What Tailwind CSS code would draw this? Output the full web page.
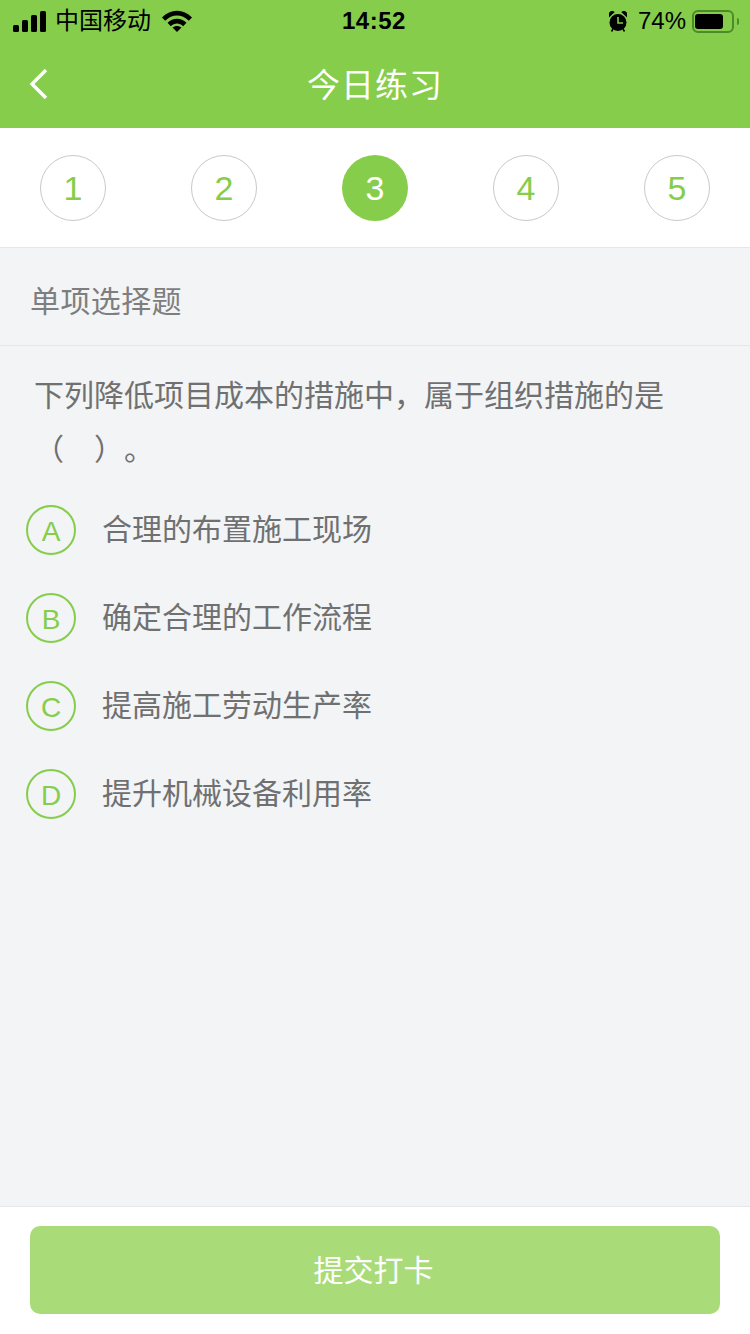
<!DOCTYPE html>
<html lang="zh">
<head>
<meta charset="utf-8">
<script src="https://cdn.jsdelivr.net/npm/@tailwindcss/browser@4"></script>
</head>
<body class="m-0">
<div class="w-[750px] h-[1334px] flex flex-col bg-[#f2f4f6] overflow-hidden font-['Liberation_Sans','Noto_Sans_CJK_SC',sans-serif]">
  <header class="h-[128px] bg-[#86cd4b] flex flex-col shrink-0">
    <div class="h-[42px] relative flex items-center justify-between pl-[13px] pr-[11px] text-black">
      <div class="flex items-center">
        <svg width="34" height="21" viewBox="0 0 34 21" fill="#000"><rect x="0" y="14" width="6" height="7" rx="1.5"/><rect x="9" y="9" width="6" height="12" rx="1.5"/><rect x="18" y="4" width="6" height="17" rx="1.5"/><rect x="27" y="0" width="6" height="21" rx="1.5"/></svg>
        <span class="ml-[8px] text-[24px] leading-none">中国移动</span>
        <svg class="ml-[11px]" width="30" height="22" viewBox="0 0 30 22"><path d="M0 7.5C8.500 -1.500 21.500 -1.500 30 7.500L26.800 10.800C20 3.800 10 3.800 3.200 10.800Z" fill="#000"/><path d="M5.500 12.800C11 7.300 19 7.300 24.500 12.800L21.200 16.200C17.500 12.600 12.500 12.600 8.800 16.200Z" fill="#000"/><path d="M10.500 17.600C13 15.300 17 15.300 19.500 17.600L15 22Z" fill="#000"/></svg>
      </div>
      <span class="absolute left-[342px] top-[8px] text-[24px] leading-[26px] font-bold tracking-[0.5px]">14:52</span>
      <div class="flex items-center">
        <svg width="18" height="21" viewBox="0 0 18 21"><circle cx="9" cy="11.500" r="8.500" fill="#000"/><path d="M9 6V12H14" stroke="#86cd4b" stroke-width="1.600" fill="none"/><path d="M0.500 5L4.500 1.200L2.800 0.300L0.500 2.300Z M17.500 5L13.500 1.200L15.200 0.300L17.500 2.300Z M4 18L2.500 20.500 M14 18L15.500 20.500" fill="#000" stroke="#000" stroke-width="1.500"/></svg>
        <span class="ml-[11px] text-[24px] leading-none">74%</span>
        <div class="ml-[6px] w-[42px] h-[23px] rounded-[6px] border-2 border-[#4c8a2a] py-[2px] pl-[1px]">
          <div class="w-[28px] h-full bg-black rounded-[3px]"></div>
        </div>
        <div class="ml-[3px] w-[2px] h-[7px] rounded-r-[2px] bg-[#4c8a2a]"></div>
      </div>
    </div>
    <div class="h-[86px] relative flex items-center justify-center">
      <svg class="absolute left-[28px] top-[26px]" width="22" height="32" viewBox="0 0 22 32"><path d="M18 2L4 16L18 30" stroke="#fff" stroke-width="3.400" fill="none"/></svg>
      <span class="text-white text-[33px] leading-none tracking-[1px]">今日练习</span>
    </div>
  </header>

  <nav class="h-[120px] shrink-0 bg-white border-b border-[#e6e7e9] flex items-start justify-between px-[40px] pt-[27px]">
    <div class="size-[66px] rounded-full border border-[#c9c9c9] flex items-center justify-center text-[34px] text-[#86cd4b]">1</div>
    <div class="size-[66px] rounded-full border border-[#c9c9c9] flex items-center justify-center text-[34px] text-[#86cd4b]">2</div>
    <div class="size-[66px] rounded-full bg-[#86cd4b] flex items-center justify-center text-[34px] text-white">3</div>
    <div class="size-[66px] rounded-full border border-[#c9c9c9] flex items-center justify-center text-[34px] text-[#86cd4b]">4</div>
    <div class="size-[66px] rounded-full border border-[#c9c9c9] flex items-center justify-center text-[34px] text-[#86cd4b]">5</div>
  </nav>

  <main class="flex-1 flex flex-col">
    <div class="h-[98px] shrink-0 border-b border-[#e6e7e9] flex items-center pl-[30px] pt-[10px] text-[30px] tracking-[0.4px] leading-none text-[#7e7e7e]">单项选择题</div>
    <p class="pl-[34px] pr-[80px] pt-[23px] text-[30px] leading-[54px] text-[#707070] [text-spacing-trim:space-all]">下列降低项目成本的措施中，属于组织措施的是（　）。</p>
    <ul class="flex flex-col mt-[9px] pl-[26px]">
      <li class="h-[88px] flex items-center">
        <span class="size-[50px] rounded-full border-2 border-[#86cd4b] flex items-center justify-center pt-[3px] text-[28px] text-[#86cd4b]">A</span>
        <span class="ml-[26px] text-[30px] leading-none text-[#707070]">合理的布置施工现场</span>
      </li>
      <li class="h-[88px] flex items-center">
        <span class="size-[50px] rounded-full border-2 border-[#86cd4b] flex items-center justify-center pt-[3px] text-[28px] text-[#86cd4b]">B</span>
        <span class="ml-[26px] text-[30px] leading-none text-[#707070]">确定合理的工作流程</span>
      </li>
      <li class="h-[88px] flex items-center">
        <span class="size-[50px] rounded-full border-2 border-[#86cd4b] flex items-center justify-center pt-[3px] text-[28px] text-[#86cd4b]">C</span>
        <span class="ml-[26px] text-[30px] leading-none text-[#707070]">提高施工劳动生产率</span>
      </li>
      <li class="h-[88px] flex items-center">
        <span class="size-[50px] rounded-full border-2 border-[#86cd4b] flex items-center justify-center pt-[3px] text-[28px] text-[#86cd4b]">D</span>
        <span class="ml-[26px] text-[30px] leading-none text-[#707070]">提升机械设备利用率</span>
      </li>
    </ul>
  </main>

  <footer class="h-[128px] shrink-0 bg-white border-t border-[#e6e7e9] px-[30px] pt-[19px]">
    <button class="w-full h-[88px] rounded-[10px] bg-[#a9dc79] text-white text-[30px] leading-none pr-[3px] pt-[2px]">提交打卡</button>
  </footer>
</div>
</body>
</html>
